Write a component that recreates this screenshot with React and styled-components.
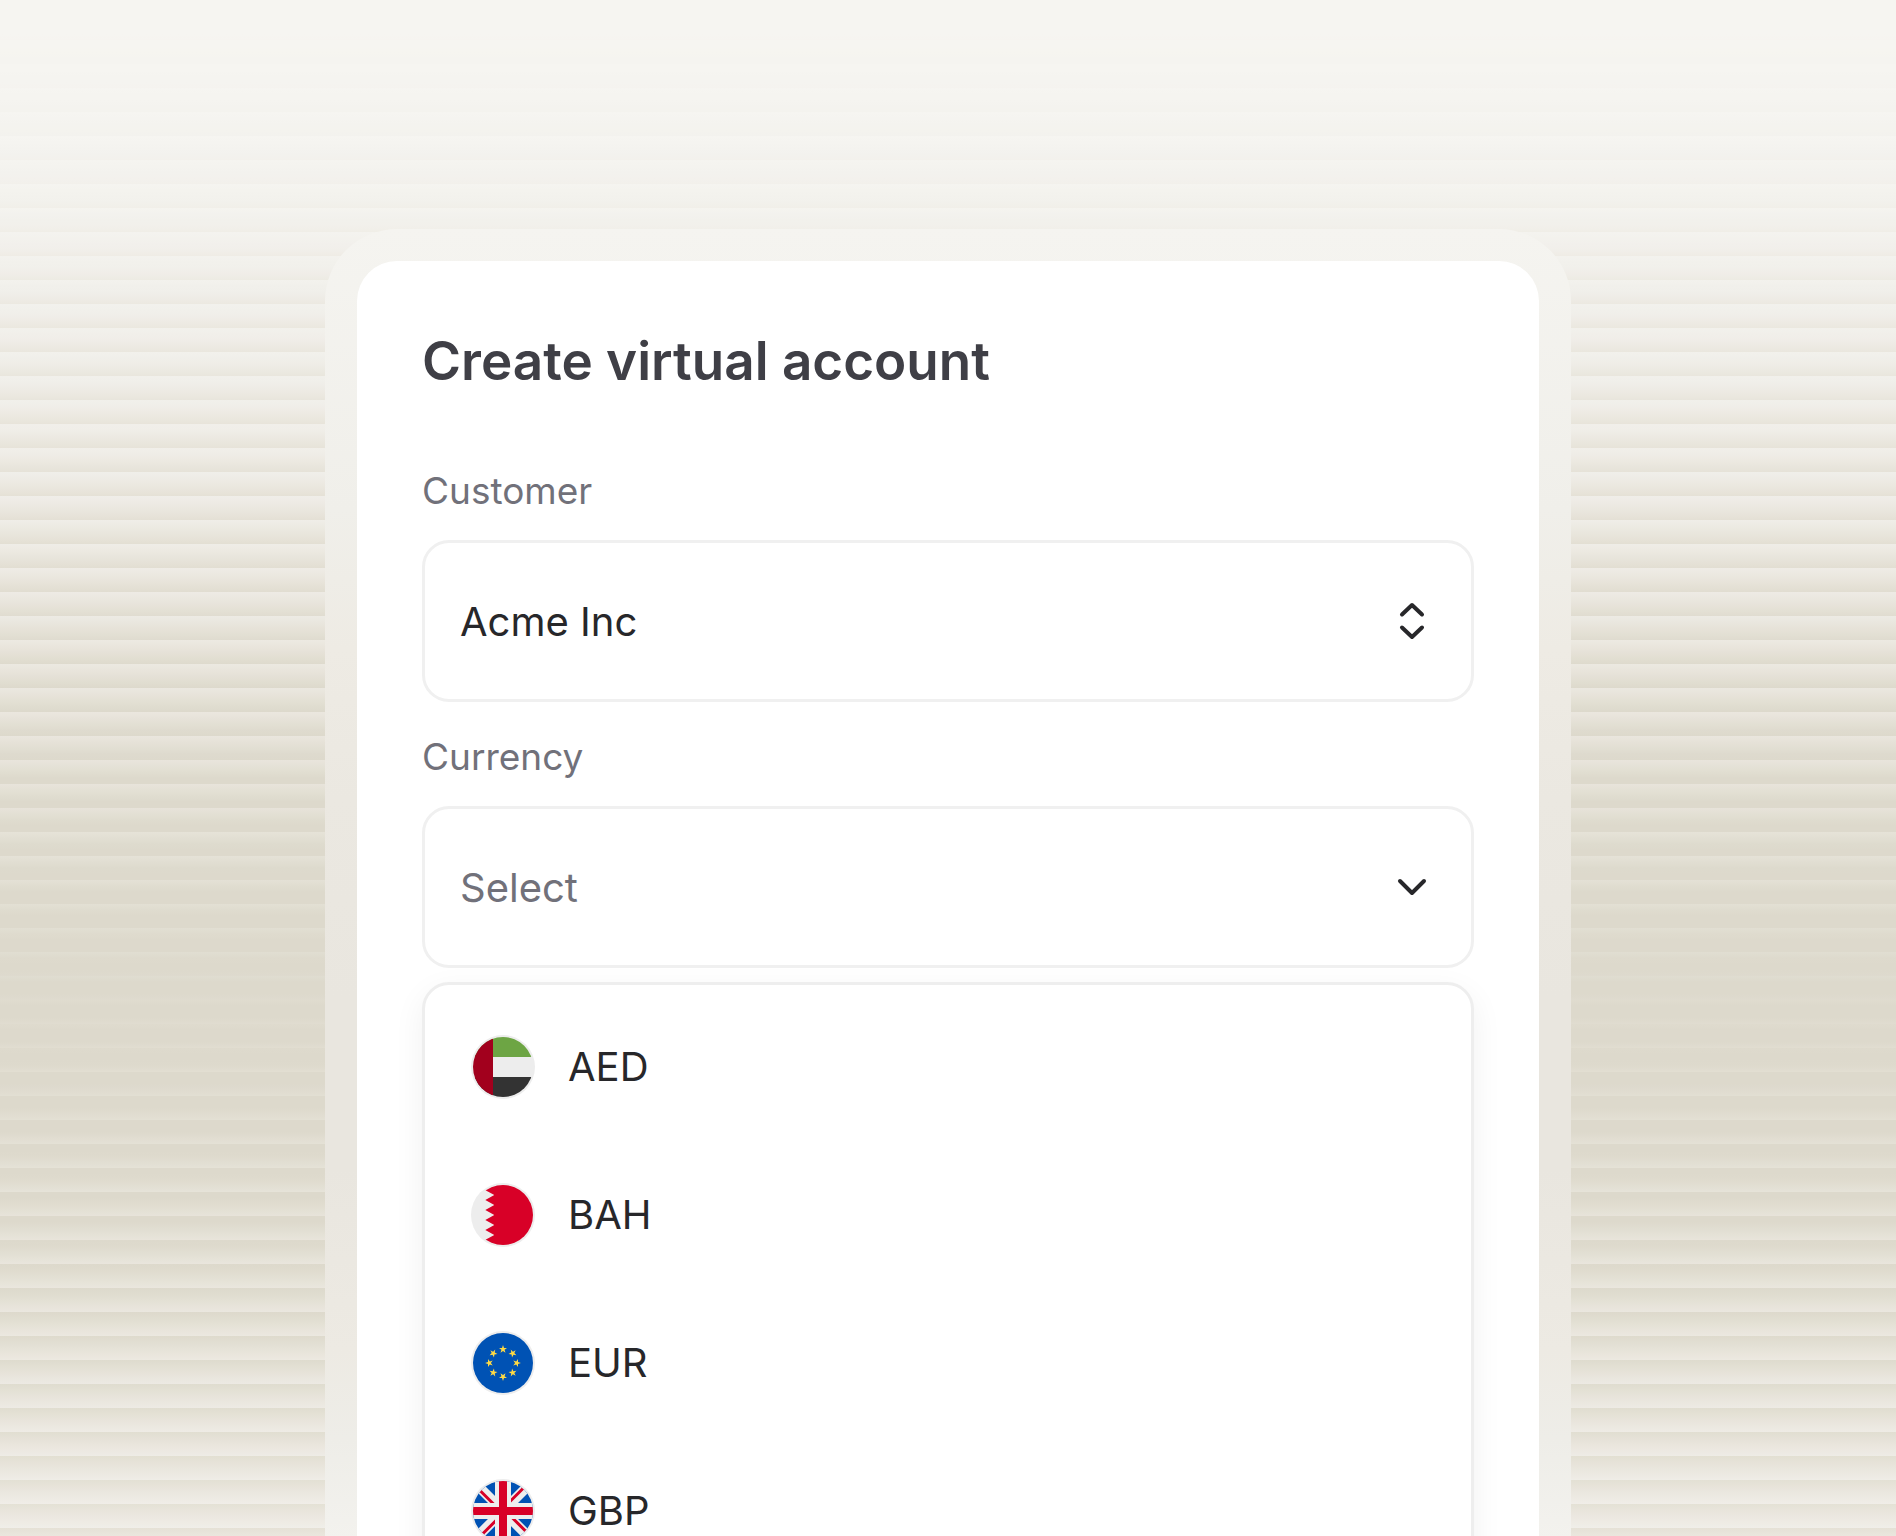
import React, { useState } from 'react'
import styled, { createGlobalStyle } from 'styled-components'

const GlobalStyle = createGlobalStyle`
  * {
    box-sizing: border-box;
  }

  body {
    margin: 0;
    font-family: Inter, "Liberation Sans", sans-serif;
    color: #27272a;
    background-color: #f6f5f1;
  }
`

const Page = styled.main`
  position: relative;
  height: 100vh;
  overflow: hidden;
  padding: 229px 24px 0;
`

const Backdrop = styled.div`
  position: absolute;
  inset: 0;
  overflow: hidden;
`

const Slat = styled.div`
  height: 24px;

  &:first-child {
    height: 16px;
  }
`

const Frame = styled.div`
  position: relative;
  max-width: 1246px;
  margin: 0 auto;
  padding: 32px;
  border-radius: 72px;
  background: linear-gradient(
    #f5f4f0 0,
    #f0efea 280px,
    #eeebe4 420px,
    #ebe8e1 570px,
    #e9e6df 770px,
    #e9e6df 940px,
    #edeae3 1120px,
    #eeede8 1210px,
    #f3f2ee 1310px
  );
`

const Card = styled.form`
  padding: 65px;
  border-radius: 40px;
  background-color: #fff;
`

const Title = styled.h1`
  margin: 0 0 72px;
  font-size: 53px;
  font-weight: 600;
  line-height: 70px;
  color: #3f3f46;
`

const Field = styled.div`
  margin-bottom: 32px;
`

const Label = styled.label`
  display: block;
  margin-bottom: 26px;
  font-size: 37px;
  line-height: 46px;
  color: #71717a;
`

const SelectBox = styled.div`
  display: grid;
  align-items: center;

  > * {
    grid-area: 1 / 1;
  }

  svg {
    justify-self: end;
    margin-right: 38px;
    pointer-events: none;
  }
`

const Select = styled.select`
  width: 100%;
  height: 162px;
  padding: 0 96px 0 35px;
  border: 3px solid #f0f0f0;
  border-radius: 27px;
  appearance: none;
  background-color: #fff;
  font-family: inherit;
  font-size: 40px;
  color: ${props => (props.$empty ? '#71717a' : '#27272a')};
`

const Menu = styled.ul`
  margin: 14px 0 0;
  padding: 8px;
  border: 3px solid #eee;
  border-radius: 27px;
  background-color: #fff;
  box-shadow: 0 10px 32px rgba(0, 0, 0, 0.06);
  list-style: none;
`

const Option = styled.button`
  display: flex;
  align-items: center;
  gap: 33px;
  width: 100%;
  height: 148px;
  padding: 0 38px;
  border: 0;
  border-radius: 20px;
  background: none;
  font-family: inherit;
  font-size: 40px;
  line-height: 46px;
  color: #27272a;
`

const Icon = styled.svg`
  width: 48px;
  height: 48px;
  fill: none;
  stroke: #27272a;
  stroke-width: 4;
  stroke-linecap: round;
  stroke-linejoin: round;
`

const FlagIcon = styled.svg`
  width: 64px;
  height: 64px;
`

// shade of the backdrop behind the ribbed glass, by height in px
const SHADES = [
  [-100, [246, 245, 241]],
  [200, [241, 240, 235]],
  [320, [240, 238, 233]],
  [480, [236, 233, 225]],
  [600, [232, 228, 219]],
  [720, [227, 224, 212]],
  [880, [221, 217, 204]],
  [1130, [221, 217, 204]],
  [1300, [227, 224, 212]],
  [1420, [232, 228, 219]],
  [1560, [236, 233, 226]],
  [1740, [241, 239, 234]],
  [1900, [245, 244, 240]],
]

const TOP = [246, 245, 241]

const mix = (a, b, t) => a.map((v, i) => v + (b[i] - v) * t)

const shadeAt = y => {
  if (y <= SHADES[0][0]) return SHADES[0][1]
  const next = SHADES.findIndex(([at]) => at > y)
  if (next === -1) return SHADES[SHADES.length - 1][1]
  const [y0, c0] = SHADES[next - 1]
  const [y1, c1] = SHADES[next]
  return mix(c0, c1, (y - y0) / (y1 - y0))
}

// every slat shows a squeezed slice, 200px up and down from its middle
const slatFill = middle => {
  const clear = Math.min(1, Math.max(0, middle / 300))
  const stops = [-200, -100, 0, 100, 200].map(offset => {
    const c = mix(TOP, shadeAt(middle + offset), clear)
    return `rgb(${c.map(Math.round).join(', ')})`
  })
  return `linear-gradient(${stops.join(', ')})`
}

const SLATS = Array.from({ length: 100 }, (_, i) => slatFill(i * 24 + 4))

const STAR = 'M0 -4.2 L1 -1.3 H4 L1.55 0.5 L2.5 3.4 L0 1.6 L-2.5 3.4 L-1.55 0.5 L-4 -1.3 H-1 Z'

const FLAGS = {
  AED: (
    <>
      <path fill="#6da544" d="M0 0H64V22H0Z" />
      <path fill="#333" d="M0 42H64V64H0Z" />
      <path fill="#a2001d" d="M0 0H22V64H0Z" />
    </>
  ),
  BAH: (
    <path
      fill="#d80027"
      d="M14 0V7L23.3 12L14.3 17L23.3 22L14.3 27L23.3 32L14.3 37L23.3 42L14.3 47L23.3 52L14 57V64H64V0Z"
    />
  ),
  EUR: (
    <>
      <path fill="#0052b4" d="M0 0H64V64H0Z" />
      {[0, 45, 90, 135, 180, 225, 270, 315].map(angle => (
        <path
          key={angle}
          fill="#ffda44"
          d={STAR}
          transform={`rotate(${angle} 32 32) translate(32 18.3)`}
        />
      ))}
    </>
  ),
  GBP: (
    <>
      <path fill="#0052b4" d="M0 0H64V64H0Z" />
      <path stroke="#eee" strokeWidth="10" d="M4 4L60 60M60 4L4 60" />
      <path stroke="#d80027" strokeWidth="3" d="M9.5 12L27 29.5M52 9.5L34.5 27M54.5 52L37 34.5M12 54.5L29.5 37" />
      <path stroke="#eee" strokeWidth="16" d="M32 0V64M0 32H64" />
      <path stroke="#d80027" strokeWidth="8" d="M32 0V64M0 32H64" />
    </>
  ),
}

const Flag = ({ code }) => (
  <FlagIcon viewBox="0 0 64 64" aria-hidden="true">
    <clipPath id={`flag-${code}`}>
      <circle cx="32" cy="32" r="30" />
    </clipPath>
    <circle cx="32" cy="32" r="32" fill="#ededed" />
    <g clipPath={`url(#flag-${code})`}>{FLAGS[code]}</g>
  </FlagIcon>
)

const App = () => {
  const [currency, setCurrency] = useState('')

  return (
    <>
      <GlobalStyle />
      <Page>
        <Backdrop aria-hidden="true">
          {SLATS.map((background, i) => (
            <Slat key={i} style={{ background }} />
          ))}
        </Backdrop>

        <Frame>
          <Card>
            <Title>Create virtual account</Title>

            <Field>
              <Label htmlFor="customer">Customer</Label>
              <SelectBox>
                <Select id="customer">
                  <option>Acme Inc</option>
                </Select>
                <Icon viewBox="0 0 48 48" aria-hidden="true">
                  <path d="M14 17.5L24 8L34 17.5M14 30.5L24 40L34 30.5" />
                </Icon>
              </SelectBox>
            </Field>

            <Field>
              <Label htmlFor="currency">Currency</Label>
              <SelectBox>
                <Select
                  id="currency"
                  $empty={!currency}
                  value={currency}
                  onChange={e => setCurrency(e.target.value)}
                >
                  <option value="">Select</option>
                  {Object.keys(FLAGS).map(code => (
                    <option key={code}>{code}</option>
                  ))}
                </Select>
                <Icon viewBox="0 0 48 48" aria-hidden="true">
                  <path d="M12 18L24 30L36 18" />
                </Icon>
              </SelectBox>
              <Menu>
                {Object.keys(FLAGS).map(code => (
                  <li key={code}>
                    <Option type="button" onClick={() => setCurrency(code)}>
                      <Flag code={code} />
                      {code}
                    </Option>
                  </li>
                ))}
              </Menu>
            </Field>
          </Card>
        </Frame>
      </Page>
    </>
  )
}

export default App
